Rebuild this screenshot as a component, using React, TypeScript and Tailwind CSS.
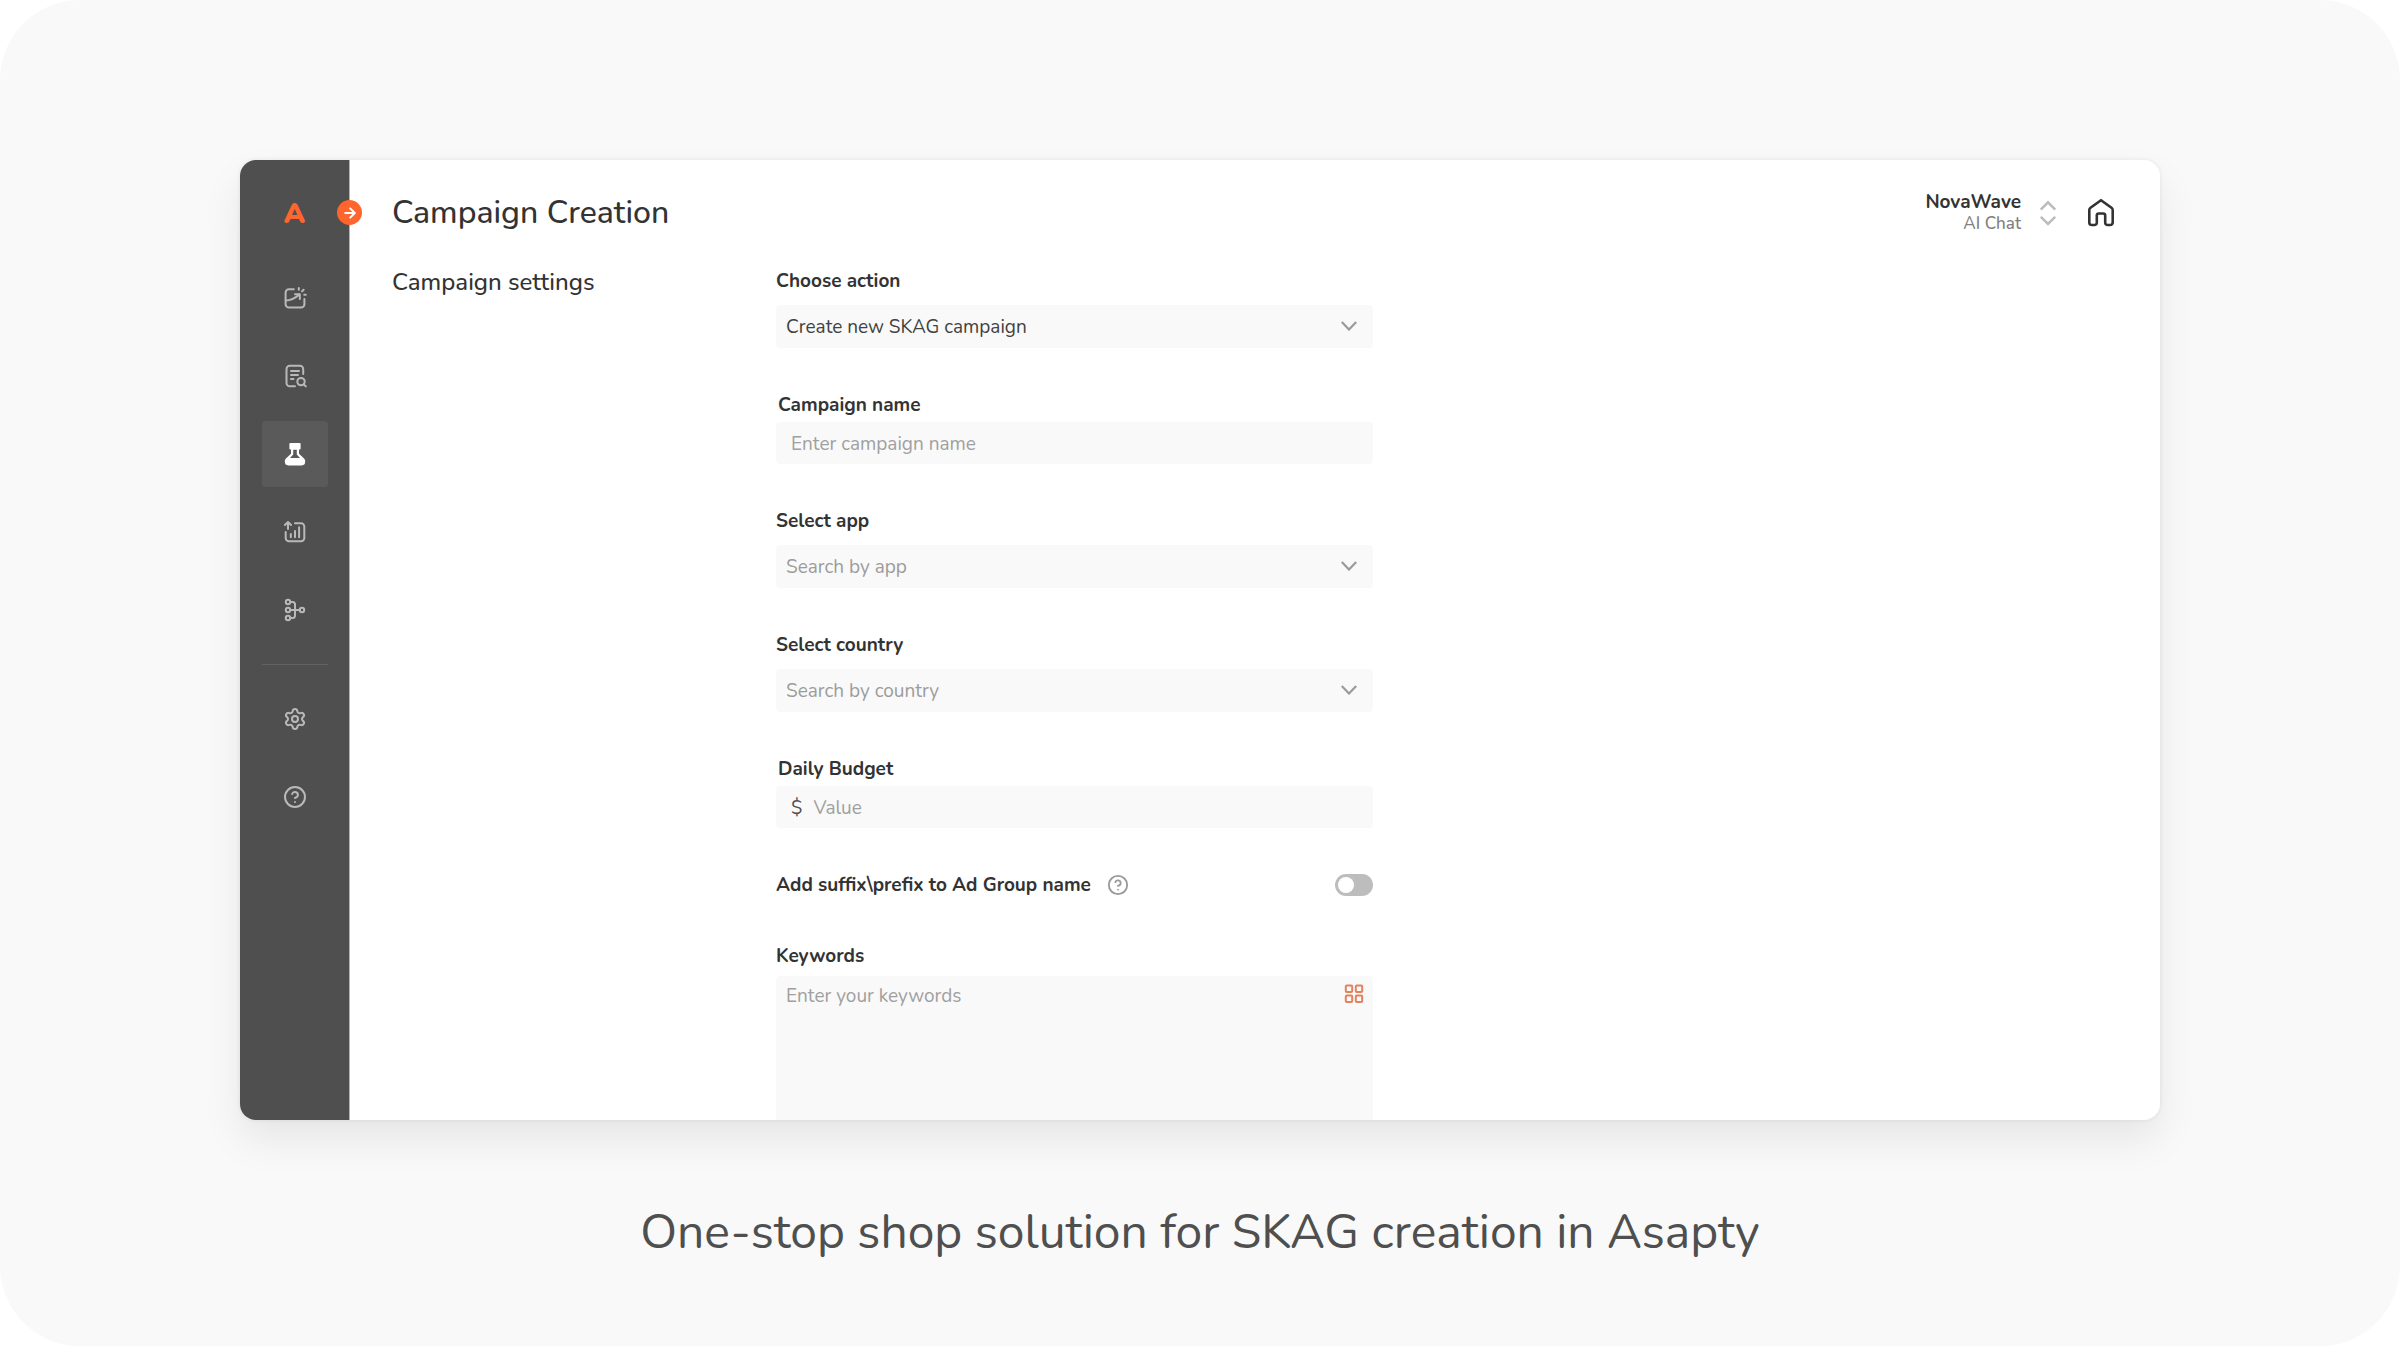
import { FC, ReactNode } from "react";
import { CircleQuestionMark, Settings } from "lucide-react";

interface IconProps {
  children: ReactNode;
}

const Icon: FC<IconProps> = ({ children }) => (
  <svg
    viewBox="0 0 24 24"
    className="w-6 h-6"
    fill="none"
    stroke="currentColor"
    strokeWidth={2}
    strokeLinecap="round"
    strokeLinejoin="round"
    aria-hidden="true"
  >
    {children}
  </svg>
);

const InsightsIcon = () => (
  <Icon>
    <path d="M10.8 3.2H6A3.4 3.4 0 0 0 2.6 6.6v11.6A3.4 3.4 0 0 0 6 21.6h12a3.4 3.4 0 0 0 3.4-3.4V13" />
    <path d="M2.8 14.6c5.4 0 9-2 13.6-6" />
    <path d="M12 8.2h4.8V13" />
    <path d="M15.8 2v1.8M20.6 3.8 19 5.4M21.2 8.7h1.6" />
  </Icon>
);

const ReportIcon = () => (
  <Icon>
    <path d="M12 22.3H6.8A3.3 3.3 0 0 1 3.5 19V5a3.3 3.3 0 0 1 3.3-3.3h10.1A3.3 3.3 0 0 1 20.2 5v5" />
    <path d="M8 7h8M8 11h7M8 15h2.5" />
    <circle cx="18" cy="17.6" r="3.7" />
    <path d="m20.8 20.4 2 2" />
  </Icon>
);

const FlaskIcon = () => (
  <Icon>
    <rect x="6.4" y="1" width="11.2" height="6.4" rx="1" fill="currentColor" stroke="none" />
    <path
      fill="currentColor"
      stroke="none"
      fillRule="evenodd"
      d="M8 6.5v5.3l-4.8 4.4C2.2 17.1 1.8 18 1.8 19.6c0 2.6 1.2 3.8 3.6 3.8h13.2c2.4 0 3.6-1.2 3.6-3.8 0-1.6-.4-2.5-1.4-3.4L16 11.8V6.5ZM10.2 7.400h3.600v5.200l3.200 3.400H7l3.200-3.400Z"
    />
  </Icon>
);

const ChartIcon = () => (
  <Icon>
    <path d="M12 3.3h6A3.3 3.3 0 0 1 21.3 6.6V18a3.3 3.3 0 0 1-3.3 3.3H6A3.3 3.3 0 0 1 2.7 18v-6" />
    <path d="M5 9V2.2M1.9 5 5 2l3.1 3" />
    <path d="M7.8 14v3.2M12 11v6.2M16.1 7.2v10" />
  </Icon>
);

const FlowIcon = () => (
  <Icon>
    <circle cx="5" cy="4" r="2.2" />
    <circle cx="5" cy="12" r="2.2" />
    <circle cx="5" cy="20" r="2.2" />
    <circle cx="19" cy="12" r="2.2" />
    <path d="M7.2 12h9.6M7.2 4h2.3A2.5 2.5 0 0 1 12 6.5v11A2.5 2.5 0 0 1 9.5 20H7.2" />
  </Icon>
);

const HomeIcon = () => (
  <svg
    viewBox="0 0 32 32"
    className="w-8 h-8"
    fill="none"
    stroke="currentColor"
    strokeWidth={2.6}
    strokeLinejoin="round"
    aria-hidden="true"
  >
    <path d="M16 3.200 5.500 10.800q-1.200.9-1.200 2.300V25.500a2.500 2.500 0 0 0 2.500 2.500h2.700a2.300 2.300 0 0 0 2.300-2.300V18.500a2 2 0 0 1 2-2h4.400a2 2 0 0 1 2 2v7.200a2.300 2.300 0 0 0 2.300 2.300h2.700a2.500 2.500 0 0 0 2.500-2.500V13.100q0-1.400-1.200-2.300Z" />
  </svg>
);

const mainNav = [
  { label: "Insights", icon: <InsightsIcon /> },
  { label: "Reports", icon: <ReportIcon /> },
  { label: "Campaign Creation", icon: <FlaskIcon />, active: true },
  { label: "Performance", icon: <ChartIcon /> },
  { label: "Automation", icon: <FlowIcon /> },
];

const helpNav = [
  { label: "Settings", icon: <Settings size={24} strokeWidth={2} /> },
  { label: "Help", icon: <CircleQuestionMark size={24} strokeWidth={2} /> },
];

interface NavItemProps {
  label: string;
  icon: ReactNode;
  active?: boolean;
}

const NavItem: FC<NavItemProps> = ({ label, icon, active }) => (
  <a
    href="#"
    aria-label={label}
    className={
      active
        ? "flex items-center justify-center w-[66px] h-[66px] rounded bg-[#5a5a5a] text-white"
        : "flex items-center justify-center w-[66px] h-[66px] rounded text-[#b9b9b9]"
    }
  >
    {icon}
  </a>
);

const Sidebar = () => (
  <aside className="relative flex flex-col items-center w-[110px] shrink-0 bg-[#4f4f4f] border-r border-[#b5b5b5]">
    <div className="flex items-center h-[105px] pt-0.5">
      <a href="#" className="text-[28px] leading-8 font-black text-[#ff652d]">
        A
      </a>
    </div>
    <button
      type="button"
      aria-label="Expand menu"
      className="absolute top-10 -right-[13px] flex items-center justify-center w-[25px] h-[25px] rounded-full bg-[#ff652d] text-white"
    >
      <svg
        viewBox="0 0 12 12"
        className="w-3 h-3"
        fill="none"
        stroke="currentColor"
        strokeWidth={2}
        strokeLinecap="round"
        strokeLinejoin="round"
        aria-hidden="true"
      >
        <path d="M1.2 6h9.4M6.2 1.4 10.8 6l-4.6 4.6" />
      </svg>
    </button>
    <nav className="flex flex-col items-center gap-3">
      {mainNav.map((item) => (
        <NavItem key={item.label} {...item} />
      ))}
    </nav>
    <hr className="w-[66px] my-[21px] border-[#636363]" />
    <nav className="flex flex-col items-center gap-3">
      {helpNav.map((item) => (
        <NavItem key={item.label} {...item} />
      ))}
    </nav>
  </aside>
);

const Header = () => (
  <header className="flex items-center justify-between h-[106px]">
    <h1 className="text-[32px] leading-10 font-medium">Campaign Creation</h1>
    <div className="flex items-center">
      <button type="button" className="flex items-center gap-[19px] text-right">
        <span className="flex flex-col">
          <span className="text-[19px] leading-[22px] font-bold">NovaWave</span>
          <span className="text-[17px] leading-[22px] font-medium text-[#808080]">AI Chat</span>
        </span>
        <svg
          viewBox="0 0 16 26"
          className="w-4 h-[26px] text-[#bdbdbd]"
          fill="none"
          stroke="currentColor"
          strokeWidth={2.6}
          aria-hidden="true"
        >
          <path d="M.8 9.5 8 2.3l7.2 7.200M.8 16.800 8 24l7.200-7.200" />
        </svg>
      </button>
      <a href="#" aria-label="Home" className="ml-[29px]">
        <HomeIcon />
      </a>
    </div>
  </header>
);

interface SelectFieldProps {
  id: string;
  label: string;
  option: string;
  filled?: boolean;
}

const SelectField: FC<SelectFieldProps> = ({ id, label, option, filled }) => (
  <div className="flex flex-col gap-3">
    <label htmlFor={id} className="text-[19px] leading-6 font-bold">
      {label}
    </label>
    <div className="relative">
      <select
        id={id}
        className={
          filled
            ? "block w-full h-[43px] px-[10px] pt-0.5 rounded bg-[#f9f9f9] appearance-none text-[19px] text-[#414141]"
            : "block w-full h-[43px] px-[10px] pt-0.5 rounded bg-[#f9f9f9] appearance-none text-[19px] text-[#9c9c9c]"
        }
      >
        <option>{option}</option>
      </select>
      <svg
        viewBox="0 0 16 10"
        className="absolute right-4 top-4 w-4 h-[10px] text-[#9a9a9a] pointer-events-none"
        fill="none"
        stroke="currentColor"
        strokeWidth={2.2}
        aria-hidden="true"
      >
        <path d="M.8 1 8 8.500 15.200 1" />
      </svg>
    </div>
  </div>
);

interface TextFieldProps {
  id: string;
  label: string;
  placeholder: string;
  prefix?: string;
}

const TextField: FC<TextFieldProps> = ({ id, label, placeholder, prefix }) => (
  <div className="flex flex-col gap-[5px]">
    <label htmlFor={id} className="px-0.5 text-[19px] leading-6 font-bold">
      {label}
    </label>
    <div className="flex items-center gap-[11px] h-[42px] px-[15px] pt-0.5 rounded bg-[#f9f9f9] text-[19px]">
      {prefix && <span className="text-[#4f4f4f]">{prefix}</span>}
      <input
        id={id}
        type="text"
        placeholder={placeholder}
        className="flex-1 min-w-0 h-full bg-transparent placeholder:text-[#a0a0a0]"
      />
    </div>
  </div>
);

const CampaignForm = () => (
  <form className="flex flex-col flex-1 max-w-[597px] gap-[45px] pt-[3px]">
    <SelectField id="action" label="Choose action" option="Create new SKAG campaign" filled />
    <TextField id="name" label="Campaign name" placeholder="Enter campaign name" />
    <SelectField id="app" label="Select app" option="Search by app" />
    <SelectField id="country" label="Select country" option="Search by country" />
    <TextField id="budget" label="Daily Budget" placeholder="Value" prefix="$" />
    <div className="flex items-center justify-between">
      <div className="flex items-center gap-4">
        <label htmlFor="affix" className="text-[19px] leading-6 font-bold">
          Add suffix\prefix to Ad Group name
        </label>
        <CircleQuestionMark size={22} strokeWidth={2} className="text-[#9a9a9a]" />
      </div>
      <input
        id="affix"
        type="checkbox"
        role="switch"
        className="appearance-none flex items-center w-[38px] h-[22px] px-[3px] rounded-full bg-[#bdbdbd] before:block before:w-4 before:h-4 before:rounded-full before:bg-white checked:justify-end checked:bg-[#ff652d]"
      />
    </div>
    <div className="flex flex-col gap-2 pt-0.5">
      <label htmlFor="keywords" className="text-[19px] leading-6 font-bold">
        Keywords
      </label>
      <div className="relative">
        <textarea
          id="keywords"
          rows={8}
          placeholder="Enter your keywords"
          className="block w-full px-[10px] py-2 rounded bg-[#f9f9f9] resize-none text-[19px] leading-6 placeholder:text-[#a0a0a0]"
        />
        <button type="button" aria-label="Keyword groups" className="absolute top-2 right-[9px] text-[#e2825f]">
          <svg viewBox="0 0 20 20" className="w-5 h-5" fill="none" stroke="currentColor" strokeWidth={2} aria-hidden="true">
            <rect x="1.8" y="1.4" width="6.4" height="6.6" rx="1" />
            <rect x="11.8" y="1.4" width="6.4" height="6.6" rx="1" />
            <rect x="1.8" y="11.4" width="6.4" height="6.6" rx="1" />
            <rect x="11.8" y="11.4" width="6.4" height="6.6" rx="1" />
          </svg>
        </button>
      </div>
    </div>
  </form>
);

const App = () => {
  return (
    <div className="min-h-screen bg-white font-['Nunito','Open_Sans',sans-serif] text-[#333333]">
      <div className="flex flex-col items-center min-h-screen pt-40 rounded-[80px] bg-[#f9f9f9]">
        <div className="flex w-4/5 aspect-[2/1] rounded-2xl overflow-hidden bg-white shadow-[0_0_5px_rgba(0,0,0,0.08),0_20px_40px_rgba(0,0,0,0.08)]">
          <Sidebar />
          <main className="flex-1 min-w-0 h-full overflow-hidden pl-[42px] pr-[43px]">
            <Header />
            <div className="flex">
              <h2 className="w-96 shrink-0 text-2xl leading-8 font-medium">Campaign settings</h2>
              <CampaignForm />
            </div>
          </main>
        </div>
        <p className="mt-20 text-5xl leading-[64px] text-center text-[#4f4f4f]">
          One-stop shop solution for SKAG creation in Asapty
        </p>
      </div>
    </div>
  );
};

export default App;
